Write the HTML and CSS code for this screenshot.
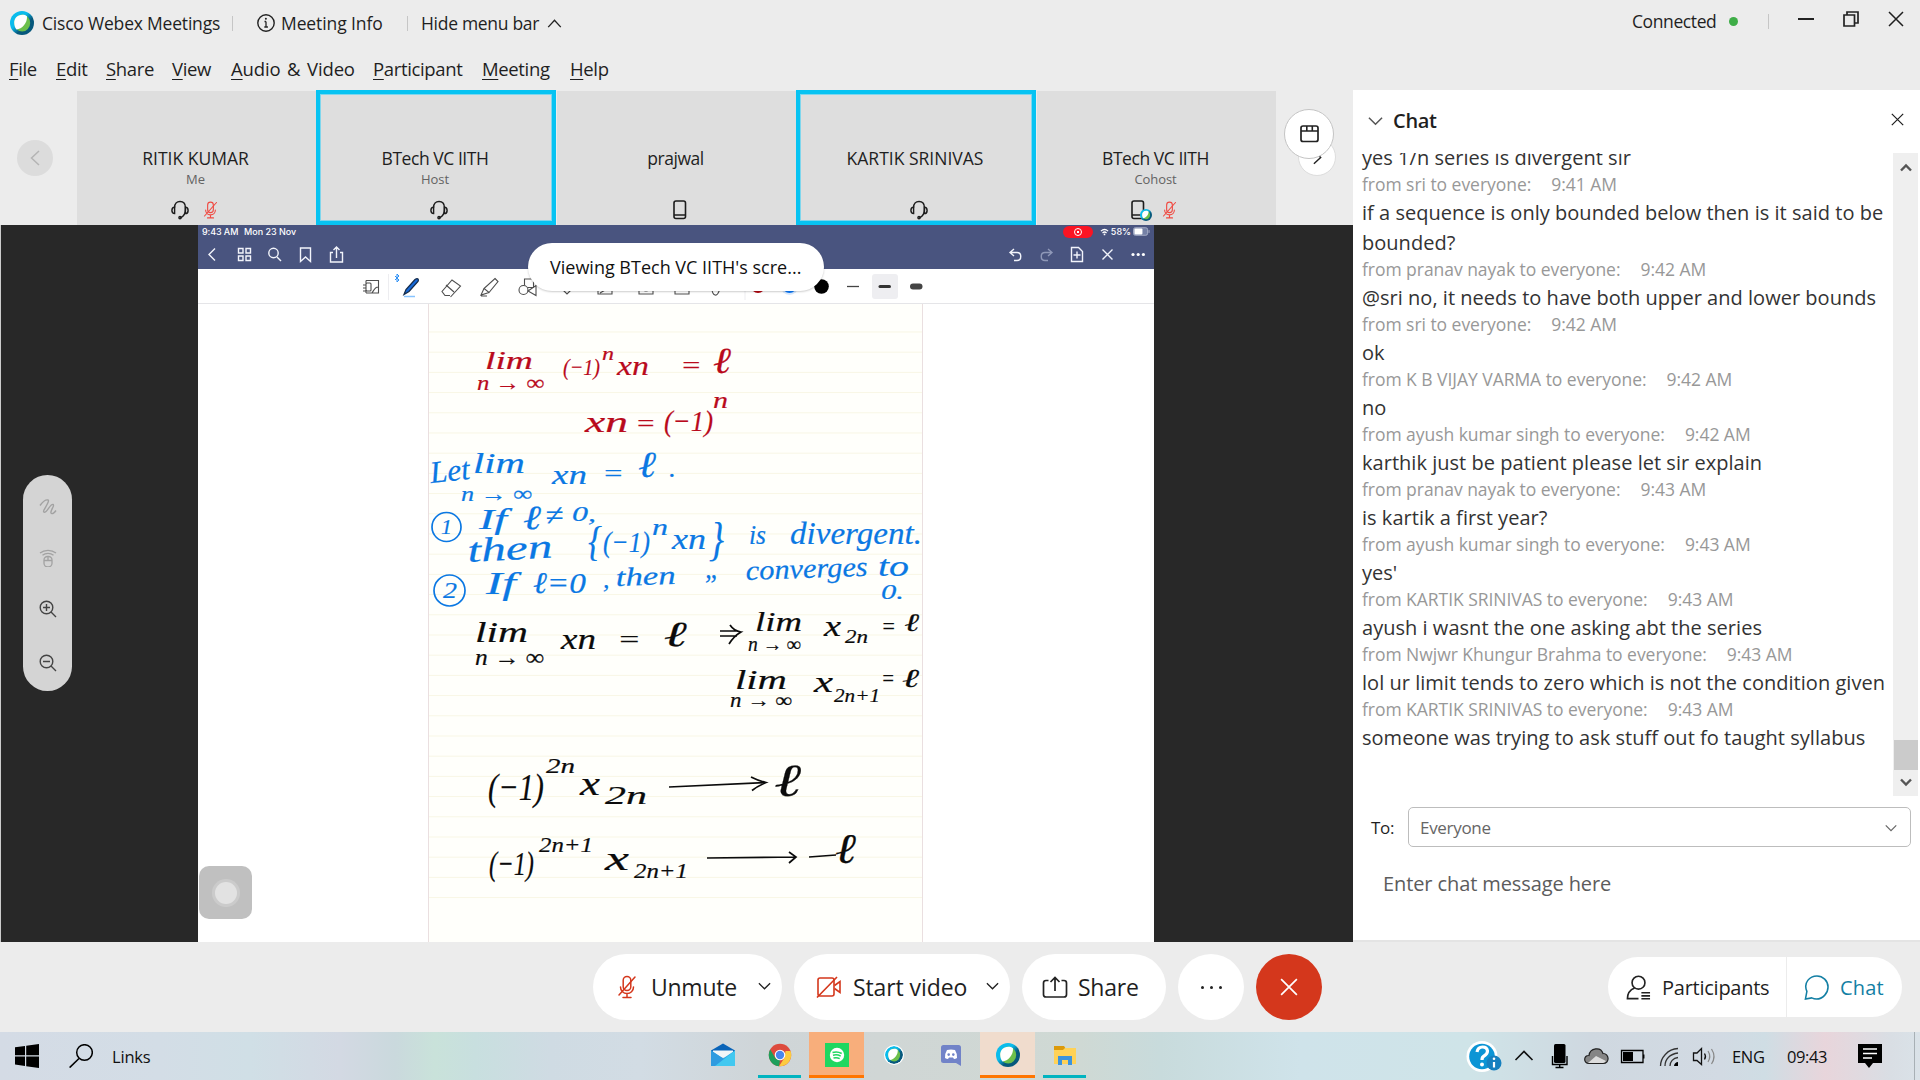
FILE: index.html
```html
<!DOCTYPE html>
<html lang="en">
<head>
<meta charset="utf-8">
<title>Cisco Webex Meetings</title>
<link rel="stylesheet" href="styles.css">
</head>
<body>
<svg width="0" height="0" class="defs">
  <defs>
    <linearGradient id="wxr" x1="0" y1="0" x2="1" y2="1"><stop offset=".4" stop-color="#0bbcec"/><stop offset=".62" stop-color="#07587c"/></linearGradient>
    <symbol id="webex" viewBox="0 0 24 24"><circle cx="12" cy="12" r="12" fill="url(#wxr)"/><ellipse cx="12.2" cy="12" rx="8" ry="8.6" fill="#6cbf4b"/><path d="M15 4C8 2.500 4 7 4.200 12c.1 3 1 5 2.300 6.500C12 18 17.500 12 17 5.200z" fill="#fff"/></symbol>
    <symbol id="headset" viewBox="0 0 20 22"><g fill="none" stroke="#1c1c1c" stroke-width="1.600" stroke-linecap="round"><path d="M4 8C4 4 6.500 1.500 10 1.500S16 4 16 8v3c0 4-1.500 6.500-5 8.500"/><path d="M4 8v7C2.200 15 1 13.500 1 11.500S2.200 8 4 8zM16 8v7c1.800 0 3-1.500 3-3.500S17.800 8 16 8z"/><circle cx="10" cy="19.500" r="1.200"/></g></symbol>
    <symbol id="mute" viewBox="0 0 20 24"><g fill="none" stroke="currentColor" stroke-width="1.500" stroke-linecap="round"><rect x="6.200" y="1.500" width="7.600" height="14" rx="3.800"/><path d="M3.500 12c0 4 3 6.500 6.500 6.500s6.500-2.500 6.500-6.500M10 18.500v4M6 22.500h8M18 2 2 20"/></g></symbol>
    <symbol id="phone" viewBox="0 0 14 20"><rect x="1" y="1" width="11.500" height="17.500" rx="2" fill="none" stroke="#1c1c1c" stroke-width="1.600"/><path d="M1 15h11.500" stroke="#1c1c1c" stroke-width="1.500"/></symbol>
    <symbol id="down" viewBox="0 0 16 10"><path d="M1 1.500 8 8.500l7-7" fill="none" stroke="currentColor" stroke-width="1.600"/></symbol>
    <symbol id="cross" viewBox="0 0 16 16"><path d="M1 1l14 14M15 1 1 15" fill="none" stroke="currentColor" stroke-width="1.500"/></symbol>
  </defs>
</svg>

<header class="titlebar">
  <svg class="logo"><use href="#webex"/></svg>
  <span class="app-name">Cisco Webex Meetings</span>
  <i class="sep sep-a"></i>
  <svg class="info" viewBox="0 0 18 18"><circle cx="9" cy="9" r="8.200" fill="none" stroke="#222" stroke-width="1.400"/><path d="M9 7.500v5.500M7.500 7.500H9M7.300 13h3.600" stroke="#222" stroke-width="1.300"/><circle cx="8.900" cy="4.800" r="1" fill="#222"/></svg>
  <span class="info-text">Meeting Info</span>
  <i class="sep sep-b"></i>
  <span class="hide-text">Hide menu bar</span>
  <svg class="hide-chev" viewBox="0 0 16 10"><path d="M1 9 8 1.500 15 9" fill="none" stroke="#222" stroke-width="1.500"/></svg>
  <div class="window-side">
    <span class="connected">Connected</span><i class="dot"></i><i class="sep sep-c"></i>
    <svg class="win min" viewBox="0 0 16 16"><path d="M0 8h16" stroke="#222" stroke-width="2"/></svg>
    <svg class="win" viewBox="0 0 16 16"><path d="M1 4h10.500v11H1zM4 4V1h11v11h-3.500" fill="none" stroke="#222" stroke-width="1.700"/></svg>
    <svg class="win"><use href="#cross"/></svg>
  </div>
</header>
<nav class="menu"><span><u>F</u>ile</span><span><u>E</u>dit</span><span><u>S</u>hare</span><span><u>V</u>iew</span><span class="av"><u>A</u>udio &amp; Video</span><span><u>P</u>articipant</span><span><u>M</u>eeting</span><span><u>H</u>elp</span></nav>

<main class="work">
  <section class="meeting">
    <div class="strip">
      <div class="prev"><svg viewBox="0 0 10 16"><path d="M9 1 1.500 8 9 15" fill="none" stroke="#b4b4b4" stroke-width="1.500"/></svg></div>
      <div class="tiles">
        <div class="tile"><b class="caps">RITIK KUMAR</b><small>Me</small><div class="tile-icons pair"><svg class="hs"><use href="#headset"/></svg><svg class="mu"><use href="#mute"/></svg></div></div>
        <div class="tile speaking"><b>BTech VC IITH</b><small>Host</small><div class="tile-icons shift"><svg class="hs"><use href="#headset"/></svg></div></div>
        <div class="tile"><b>prajwal</b><small></small><div class="tile-icons shift"><svg class="ph"><use href="#phone"/></svg></div></div>
        <div class="tile speaking"><b class="caps">KARTIK SRINIVAS</b><small></small><div class="tile-icons shift"><svg class="hs"><use href="#headset"/></svg></div></div>
        <div class="tile"><b>BTech VC IITH</b><small>Cohost</small><div class="tile-icons pair"><svg class="ph"><use href="#phone"/></svg><svg class="badge"><use href="#webex"/></svg><svg class="mu"><use href="#mute"/></svg></div></div>
      </div>
      <div class="pager">
        <div class="next"><svg viewBox="0 0 10 16"><path d="M1 1l7.500 7L1 15" fill="none" stroke="#222" stroke-width="1.600"/></svg></div>
        <div class="layout"><svg viewBox="0 0 20 18"><rect x="1" y="1" width="17" height="15.500" rx="2" fill="none" stroke="#222" stroke-width="1.700"/><path d="M1 6h17M6.800 1v5M12.300 1v5" stroke="#222" stroke-width="1.600"/></svg></div>
      </div>
    </div>

    <div class="stage">
      <div class="tool-rail">
        <svg viewBox="0 0 18 18"><path d="M1 7.500C4 3.500 7 1.500 9 2s-3 8-4 10 0 3 2 1.500S12 5.500 14 6.500 11 13 12 15s4-1 5-2.500" fill="none" stroke="#a2a2a2" stroke-width="1.400"/></svg>
        <svg viewBox="0 0 18 18"><g fill="none" stroke="#a2a2a2" stroke-width="1.300"><path d="M1 4c4.500-3.600 11.500-3.600 16 0M3.500 6.200c3-2.400 8-2.400 11 0"/><rect x="5" y="7.500" width="8" height="10.300" rx="3.500"/><path d="M5 11.500h8M9 7.500v4"/></g></svg>
        <svg viewBox="0 0 18 18"><g fill="none" stroke="#444" stroke-width="1.400"><circle cx="7.500" cy="7.500" r="6.300"/><path d="M12 12l5 5M4 7.500h7M7.500 4v7"/></g></svg>
        <svg class="out" viewBox="0 0 18 18"><g fill="none" stroke="#444" stroke-width="1.400"><circle cx="7.500" cy="7.500" r="6.300"/><path d="M12 12l5 5M4 7.500h7"/></g></svg>
      </div>
      <div class="shared">
        <div class="pad-head">
          <div class="pad-status"><span class="pad-time">9:43 AM</span><span class="pad-date">Mon 23 Nov</span>
            <div class="pad-right"><span class="rec"><i></i></span><svg class="wifi" viewBox="0 0 10 8"><path d="M1 3c2.500-2.200 5.500-2.200 8 0M2.800 5c1.500-1.300 3-1.300 4.500 0" fill="none" stroke="#fff" stroke-width="1.400"/><circle cx="5" cy="6.700" r="1" fill="#fff"/></svg><span>58%</span><svg class="batt" viewBox="0 0 18 9"><rect x=".5" y=".5" width="15" height="8" rx="2" fill="#7480a5" stroke="#a8afc8"/><rect x="1.500" y="1.300" width="8.500" height="6.400" rx="1" fill="#fff"/><path d="M17 3v3" stroke="#a8afc8"/></svg></div>
          </div>
          <svg class="pad-nav" viewBox="198 240 956 29"><g fill="none" stroke="#f2f4fb" stroke-width="1.400">
            <path d="M215 248.500l-6 6 6 6"/>
            <path d="M238.500 248.500h4.500v4.500h-4.500zM246 248.500h4.500v4.500H246zM238.500 256h4.500v4.500h-4.500zM246 256h4.500v4.500H246z"/>
            <circle cx="273.500" cy="253" r="4.700"/><path d="M277 257l4 4"/>
            <path d="M300.500 248h10v13.500l-5-4.500-5 4.500z"/>
            <path d="M333 252.500h-2.500v9.500h12v-9.500H340M336.500 258v-11M333.500 250l3-3 3 3"/>
            <path d="M1014 249l-4 3.500 4 3.500M1010 252.500h7c5 0 5 8 0 8h-3"/>
            <path d="M1048 249l4 3.500-4 3.500M1052 252.500h-7c-5 0-5 8 0 8h3" stroke="#8f98b8"/>
            <path d="M1071.500 247.500h7l4 4v10h-11zM1077 251.500v7M1073.500 255h7"/>
            <path d="M1102.500 249.500l10 10M1112.500 249.500l-10 10"/></g>
            <g fill="#fff"><circle cx="1133" cy="254.500" r="1.600"/><circle cx="1138.200" cy="254.500" r="1.600"/><circle cx="1143.400" cy="254.500" r="1.600"/></g></svg>
        </div>
        <svg class="pad-tools" viewBox="198 269 956 35">
          <g fill="none" stroke="#4e4e4e" stroke-width="1.100">
            <path d="M366 280.500h12.500v12.500H366M366 280.500v3M366 290v3M363 285h3M363 288h3M363 291h3M378 287c-3 0-4 3-6 6"/><rect x="366" y="283" width="5" height="8" rx="1"/>
            <path d="M450 295.500h-5l-3-4 10-11.500 8.500 6-10 11M446 285l8 7"/>
            <path d="M495 278.500l3 3-9 11-5-4zM484 288.500l-3 6.500 8-2.500M481 296h6"/>
            <circle cx="523.500" cy="290" r="4.500"/><path d="M524.500 285v-6h9v8.500h-6M536 285.500v10l-8-4.500z"/>
            <path d="M562 289l5 5 5-5M598 289v5h14v-5M600 293l7-4M639 289v5h14v-5M643 290q3 2 6 0M675 289v5h14v-5M712 288q0 6 3 7t5-7"/>
          </g>
          <path d="M388.500 274v26M745 274v26" stroke="#ededf0"/>
          <path d="M395 276l4 4-2 2v-8l2 2-4 4" fill="none" stroke="#2c8ff5"/>
          <path d="M404 294.500l2-5 9-10c3-2 4 0 3 2l-9 10z" fill="#1769d8" stroke="#152c4b" stroke-width="1.300"/><path d="M404 296.500h11" stroke="#88c4ff" stroke-width="1.500"/>
          <circle cx="758" cy="286" r="7" fill="#b30610"/><circle cx="789.500" cy="286" r="9" fill="#d7e8fd"/><circle cx="789.500" cy="286" r="7" fill="#0a7bff"/><circle cx="821.500" cy="286.500" r="7.300" fill="#000"/>
          <rect x="872" y="274" width="26" height="25" rx="3" fill="#eeeef1"/>
          <path d="M847 286.500h12" stroke="#444" stroke-width="1.300"/><path d="M880 286.500h9.500" stroke="#333" stroke-width="3" stroke-linecap="round"/><path d="M913 286.500h6.500" stroke="#444" stroke-width="6" stroke-linecap="round"/>
          <path d="M198 303.500h956" stroke="#e5e5e8"/>
        </svg>
        <svg class="canvas" viewBox="198 304 956 638">
          <defs><pattern id="rule" x="428" y="311.300" width="494" height="20.200" patternUnits="userSpaceOnUse"><path d="M0 .5h494" stroke="#f8f6e4"/></pattern></defs>
          <rect x="428" y="304" width="494" height="638" fill="#fffffb"/>
          <rect x="428" y="325" width="494" height="580" fill="url(#rule)"/>
          <path d="M428.500 304v638M922.500 304v638" stroke="#eadfe0"/>
          <g class="ink red">
            <text x="485" y="369" textLength="48" lengthAdjust="spacingAndGlyphs" font-size="26">lim</text><text x="477" y="390" textLength="67" lengthAdjust="spacingAndGlyphs" font-size="22">n → ∞</text>
            <text x="563" y="375" textLength="37" lengthAdjust="spacingAndGlyphs" font-size="24">(−1)</text><text x="602" y="360" textLength="12" lengthAdjust="spacingAndGlyphs" font-size="19">n</text><text x="617" y="375" textLength="32" lengthAdjust="spacingAndGlyphs" font-size="28">xn</text><text x="680" y="374" textLength="22" lengthAdjust="spacingAndGlyphs" font-size="26">=</text><text x="713" y="373" textLength="18" lengthAdjust="spacingAndGlyphs" font-size="37">ℓ</text>
            <text x="585" y="432" textLength="43" lengthAdjust="spacingAndGlyphs" font-size="30">xn</text><text x="635" y="432" textLength="21" lengthAdjust="spacingAndGlyphs" font-size="26">=</text><text x="664" y="431" textLength="49" lengthAdjust="spacingAndGlyphs" font-size="30">(−1)</text><text x="713" y="408" textLength="15" lengthAdjust="spacingAndGlyphs" font-size="24">n</text>
          </g>
          <g class="ink blue">
            <text x="431" y="483" textLength="40" lengthAdjust="spacingAndGlyphs" font-size="31" transform="rotate(-6 431 483)">Let</text><text x="473" y="473" textLength="52" lengthAdjust="spacingAndGlyphs" font-size="30">lim</text><text x="461" y="501" textLength="71" lengthAdjust="spacingAndGlyphs" font-size="22">n → ∞</text><text x="552" y="484" textLength="35" lengthAdjust="spacingAndGlyphs" font-size="28">xn</text><text x="602" y="482" textLength="22" lengthAdjust="spacingAndGlyphs" font-size="26">=</text><text x="638" y="477" textLength="18" lengthAdjust="spacingAndGlyphs" font-size="37">ℓ</text><text x="669" y="477" textLength="6" font-size="28">.</text>
            <circle cx="446.500" cy="527" r="14.500"/><text x="441" y="534" textLength="11" font-size="22">1</text>
            <text x="479" y="529" textLength="28" lengthAdjust="spacingAndGlyphs" font-size="30">If</text><text x="523" y="529" textLength="18" lengthAdjust="spacingAndGlyphs" font-size="34">ℓ</text><text x="545" y="525" textLength="18" lengthAdjust="spacingAndGlyphs" font-size="30">≠</text><text x="572" y="521" textLength="24" lengthAdjust="spacingAndGlyphs" font-size="20">0,</text>
            <text x="468" y="562" textLength="85" lengthAdjust="spacingAndGlyphs" font-size="34" transform="rotate(-3 468 562)">then</text><text x="588" y="555" textLength="14" lengthAdjust="spacingAndGlyphs" font-size="43">{</text><text x="603" y="552" textLength="47" lengthAdjust="spacingAndGlyphs" font-size="30">(−1)</text><text x="652" y="535" textLength="16" lengthAdjust="spacingAndGlyphs" font-size="23">n</text><text x="672" y="549" textLength="34" lengthAdjust="spacingAndGlyphs" font-size="29">xn</text><text x="709" y="555" textLength="15" lengthAdjust="spacingAndGlyphs" font-size="46">}</text><text x="749" y="544" textLength="17" lengthAdjust="spacingAndGlyphs" font-size="27">is</text><text x="790" y="544" textLength="132" lengthAdjust="spacingAndGlyphs" font-size="32">divergent.</text>
            <circle cx="449.500" cy="590.500" r="15.500"/><text x="443" y="598" textLength="14" lengthAdjust="spacingAndGlyphs" font-size="24">2</text>
            <text x="486" y="594" textLength="30" lengthAdjust="spacingAndGlyphs" font-size="31">If</text><text x="533" y="593" textLength="53" lengthAdjust="spacingAndGlyphs" font-size="30">ℓ=0</text><text x="603" y="588" textLength="7" font-size="26">,</text><text x="616" y="586" textLength="60" lengthAdjust="spacingAndGlyphs" font-size="26" transform="rotate(-2 616 586)">then</text><text x="702" y="594" textLength="15" lengthAdjust="spacingAndGlyphs" font-size="30">”</text><text x="746" y="580" textLength="122" lengthAdjust="spacingAndGlyphs" font-size="28" transform="rotate(-2 746 580)">converges</text><text x="878" y="576" textLength="31" lengthAdjust="spacingAndGlyphs" font-size="29">to</text><text x="881" y="599" textLength="23" lengthAdjust="spacingAndGlyphs" font-size="21">0.</text>
          </g>
          <g class="ink">
            <text x="475" y="642" textLength="53" lengthAdjust="spacingAndGlyphs" font-size="29">lim</text><text x="475" y="665" textLength="69" lengthAdjust="spacingAndGlyphs" font-size="23">n → ∞</text><text x="561" y="649" textLength="35" lengthAdjust="spacingAndGlyphs" font-size="29">xn</text><text x="617" y="648" textLength="24" lengthAdjust="spacingAndGlyphs" font-size="26">=</text><text x="664" y="646" textLength="23" lengthAdjust="spacingAndGlyphs" font-size="35">ℓ</text>
            <path d="M720 631h17M720 636h17M730 625q4 6 11 7q-7 4-12 12"/>
            <text x="755" y="631" textLength="47" lengthAdjust="spacingAndGlyphs" font-size="28">lim</text><text x="748" y="651" textLength="53" lengthAdjust="spacingAndGlyphs" font-size="20">n → ∞</text><text x="824" y="636" textLength="17" lengthAdjust="spacingAndGlyphs" font-size="29">x</text><text x="845" y="643" textLength="23" lengthAdjust="spacingAndGlyphs" font-size="19">2n</text><text x="881" y="635" textLength="15" lengthAdjust="spacingAndGlyphs" font-size="25">=</text><text x="904" y="631" textLength="15" lengthAdjust="spacingAndGlyphs" font-size="25">ℓ</text>
            <text x="735" y="689" textLength="52" lengthAdjust="spacingAndGlyphs" font-size="28">lim</text><text x="730" y="707" textLength="62" lengthAdjust="spacingAndGlyphs" font-size="20">n → ∞</text><text x="814" y="692" textLength="19" lengthAdjust="spacingAndGlyphs" font-size="30">x</text><text x="834" y="702" textLength="46" lengthAdjust="spacingAndGlyphs" font-size="19">2n+1</text><text x="881" y="687" textLength="14" lengthAdjust="spacingAndGlyphs" font-size="25">=</text><text x="902" y="687" textLength="17" lengthAdjust="spacingAndGlyphs" font-size="26">ℓ</text>
            <text x="488" y="800" textLength="56" lengthAdjust="spacingAndGlyphs" font-size="38">(−1)</text><text x="546" y="773" textLength="29" lengthAdjust="spacingAndGlyphs" font-size="21">2n</text><text x="580" y="795" textLength="20" lengthAdjust="spacingAndGlyphs" font-size="33">x</text><text x="605" y="804" textLength="42" lengthAdjust="spacingAndGlyphs" font-size="26">2n</text><path d="M669 787l97-4.500M751 777q8 4 15 5.500q-9 4-14 8"/><text x="774" y="796" textLength="27" lengthAdjust="spacingAndGlyphs" font-size="46">ℓ</text>
            <text x="489" y="875" textLength="45" lengthAdjust="spacingAndGlyphs" font-size="34">(−1)</text><text x="539" y="852" textLength="54" lengthAdjust="spacingAndGlyphs" font-size="22">2n+1</text><text x="605" y="870" textLength="24" lengthAdjust="spacingAndGlyphs" font-size="33">x</text><text x="634" y="878" textLength="54" lengthAdjust="spacingAndGlyphs" font-size="22">2n+1</text><path d="M707 858l89-1M789 852l7 5-7 6M809 857l27-2"/><text x="835" y="863" textLength="21" lengthAdjust="spacingAndGlyphs" font-size="42">ℓ</text>
          </g>
        </svg>
        <div class="assist"><i></i></div>
      </div>
      <div class="banner">Viewing BTech VC IITH's scre...</div>
    </div>
  </section>

  <aside class="chat">
    <div class="chat-head"><svg class="fold"><use href="#down"/></svg><h2>Chat</h2><svg class="close"><use href="#cross"/></svg></div>
    <div class="chat-body">
      <div class="log">
        <p>yes 1/n series is divergent sir</p>
        <h3>from sri to everyone:<time>9:41 AM</time></h3><p>if a sequence is only bounded below then is it said to be<br>bounded?</p>
        <h3>from pranav nayak to everyone:<time>9:42 AM</time></h3><p>@sri no, it needs to have both upper and lower bounds</p>
        <h3>from sri to everyone:<time>9:42 AM</time></h3><p>ok</p>
        <h3>from K B VIJAY VARMA to everyone:<time>9:42 AM</time></h3><p>no</p>
        <h3>from ayush kumar singh to everyone:<time>9:42 AM</time></h3><p>karthik just be patient please let sir explain</p>
        <h3>from pranav nayak to everyone:<time>9:43 AM</time></h3><p>is kartik a first year?</p>
        <h3>from ayush kumar singh to everyone:<time>9:43 AM</time></h3><p>yes'</p>
        <h3>from KARTIK SRINIVAS to everyone:<time>9:43 AM</time></h3><p>ayush i wasnt the one asking abt the series</p>
        <h3>from Nwjwr Khungur Brahma to everyone:<time>9:43 AM</time></h3><p>lol ur limit tends to zero which is not the condition given</p>
        <h3>from KARTIK SRINIVAS to everyone:<time>9:43 AM</time></h3><p>someone was trying to ask stuff out fo taught syllabus</p>
      </div>
      <div class="scroll"><svg viewBox="0 0 12 9"><path d="M1 7.500 6 2.500l5 5" fill="none" stroke="#555" stroke-width="2.400"/></svg><i class="thumb"></i><svg viewBox="0 0 12 9"><path d="M1 1.500l5 5 5-5" fill="none" stroke="#555" stroke-width="2.400"/></svg></div>
    </div>
    <div class="to"><label>To:</label><div class="select"><span>Everyone</span><svg><use href="#down"/></svg></div></div>
    <div class="compose">Enter chat message here</div>
  </aside>
</main>

<footer class="controls">
  <div class="pill unmute"><svg class="redmic"><use href="#mute"/></svg><span>Unmute</span><svg class="drop"><use href="#down"/></svg></div>
  <div class="pill video"><svg class="cam" viewBox="0 0 26 22"><g fill="none" stroke="#d4371c" stroke-width="1.600"><rect x="2" y="2" width="16" height="18" rx="2"/><path d="M18.500 9.500 24 5.500v11l-5.500-4M1 21.500 21 1"/></g></svg><span>Start video</span><svg class="drop"><use href="#down"/></svg></div>
  <div class="pill share"><svg class="up" viewBox="0 0 26 22"><g fill="none" stroke="#222" stroke-width="1.700"><path d="M6.500 4.500H4q-2.500 0-2.500 2.500v11.500Q1.500 21 4 21h18q2.500 0 2.500-2.500V7q0-2.500-2.500-2.500h-2.500M13 15V1.500M8.500 6 13 1.500 17.500 6"/></g></svg><span>Share</span></div>
  <div class="round more"><i></i><i></i><i></i></div>
  <div class="round leave"><svg><use href="#cross"/></svg></div>
  <div class="panels">
    <div class="pill-l"><svg viewBox="0 0 26 26"><g fill="none" stroke="#222" stroke-width="1.700"><circle cx="13" cy="8" r="6.700"/><path d="M9 13.500C4 15.500 1.500 19 1.500 24.500H13M16 18.500h9M16 21.700h9M16 24.700h9"/></g></svg><span>Participants</span></div>
    <div class="pill-r"><svg viewBox="0 0 26 26"><path d="M3 17C-1 8 6 1 13.500 1c6 0 11.500 5 11.500 11.500S19.500 25 13 25c-2 0-3.500-.5-5-1.200L1.500 25z" fill="none" stroke="#137fa4" stroke-width="1.600"/></svg><span>Chat</span></div>
  </div>
</footer>

<div class="taskbar">
  <svg class="start" viewBox="0 0 24 24"><path d="M0 3.300 10 2v9.300H0zM11.200 1.700 24 0v11.300H11.200zM0 12.500h10V22L0 20.600zM11.200 12.500H24V24l-12.800-1.800z"/></svg>
  <svg class="find" viewBox="0 0 24 24"><circle cx="15.500" cy="8.500" r="7.800" fill="none" stroke="#000" stroke-width="1.500"/><path d="M10 14.500.6 23.600" stroke="#000" stroke-width="1.600"/></svg>
  <span class="links">Links</span>
  <div class="apps">
    <div class="app"><svg viewBox="0 0 24 24"><path d="M0 7.500 12 .5l12 7v3H0z" fill="#0a64b8"/><path d="M2 7.500h20v7H2z" fill="#f3f6f8"/><path d="M0 7.500l12 8 12-8V23H0z" fill="#2ba5e5"/><path d="M0 7.500 24 23H0z" fill="#2f9be0"/><path d="M4 23 24 7.500V23z" fill="#42c8f0"/></svg></div>
    <div class="app run"><svg viewBox="0 0 24 24"><circle cx="12" cy="12" r="11.200" fill="#dd4b3e"/><path d="M2.200 6.500 7.500 15.500 12 17.500 11 23.200A11.200 11.200 0 0 1 2.200 6.500z" fill="#1d9f5b"/><path d="M11 23.200l5.500-8.500L17.500 8H22.500A11.200 11.200 0 0 1 11 23.200z" fill="#fccb3f"/><circle cx="12" cy="12" r="5.300" fill="#fff"/><circle cx="12" cy="12" r="4.200" fill="#4a86ee"/></svg></div>
    <div class="app hot"><svg viewBox="0 0 24 24"><path d="M0 0h24v24H0z" fill="#1ed760"/><circle cx="12" cy="12" r="7.200" fill="#fff"/><path d="M7.500 9.500q5-1.500 9.200 1M8 12.300q4-1.200 7.700.8M8.500 15q3.500-.9 6.200.6" fill="none" stroke="#1ed760" stroke-width="1.500"/></svg></div>
    <div class="app small"><svg><use href="#webex"/></svg></div>
    <div class="app"><svg viewBox="0 0 24 24"><path d="M4.500 2h15Q22 2 22 4.500V23l-5-3H4.500Q2 20 2 17.500v-13Q2 2 4.500 2z" fill="#7183c8"/><path d="M8 7q4-1.200 8 0 2.500 4 2 8-1.500 1-3 1l-1-1.500h-4L9 16q-1.500 0-3-1-.5-4 2-8z" fill="#fff"/><circle cx="9.700" cy="11.600" r="1.300" fill="#7183c8"/><circle cx="14.300" cy="11.600" r="1.300" fill="#7183c8"/></svg></div>
    <div class="app warm"><svg><use href="#webex"/></svg></div>
    <div class="app run"><svg viewBox="0 0 24 24"><path d="M1 3h10l2 3-2 2H1z" fill="#dc9a0b"/><path d="M1 7h9l2-2h11v16H1z" fill="#ffd257"/><path d="M5 22v-9h14v9h-4v-5H9v5z" fill="#3c93dc"/></svg></div>
  </div>
  <svg class="tray" viewBox="1460 1032 270 48">
    <circle cx="1482" cy="1056.500" r="15.500" fill="#fff"/><circle cx="1482" cy="1056.500" r="12.800" fill="#0c95d5"/><path d="M1477 1052q1-5 5.500-5t5 4q0 3-3.500 5-2 1-2 4" fill="none" stroke="#fff" stroke-width="3.200"/><circle cx="1482" cy="1064.500" r="2" fill="#fff"/><circle cx="1494" cy="1063" r="7.500" fill="#1680bf"/><path d="M1494 1062v5.500" stroke="#fff" stroke-width="2.200"/><circle cx="1494" cy="1058.800" r="1.300" fill="#fff"/>
    <path d="M1515.500 1060l8.500-8.500 8.500 8.500" fill="none" stroke="#111" stroke-width="1.600"/>
    <rect x="1554" y="1044" width="11.500" height="19" rx="1.500"/><path d="M1552.500 1056v8.500h14.500V1056M1559.700 1064v4M1555.500 1067.500h8" fill="none" stroke="#000" stroke-width="1.400"/>
    <path d="M1589 1063.500c-6 0-5.500-8.500 0-8 1-8 12-9 14-2 6-.5 7.500 10 0 10z" fill="#858585" stroke="#222" stroke-width="1.200"/><path d="M1588 1063l8-7 10 5q-1 1.500-3 2z" fill="#ddd"/>
    <path d="M1621.500 1050.500h21.500v12h-21.500zM1643.800 1054.500v4" fill="none" stroke="#000" stroke-width="1.300"/><rect x="1623" y="1052" width="10" height="9"/>
    <path d="M1660.500 1066c0-8 7-17 17.500-17.500M1665 1066c0-7 5-12 13-13M1670 1066c0-4 3-8 8-8.500" fill="none" stroke="#333" stroke-width="1.300"/><path d="M1674 1066c0-2 2-4 4-4v4z"/>
    <path d="M1693.500 1053h3.500l4.500-4.500v16L1697 1060.500h-3.500z" fill="none" stroke="#111" stroke-width="1.300"/><path d="M1704.500 1053.500q2 3 0 6" fill="none" stroke="#111" stroke-width="1.300"/><path d="M1708 1051q3.500 5.500 0 11M1711.500 1049q5 7.500 0 15" fill="none" stroke="#888" stroke-width="1.200"/>
  </svg>
  <span class="lang">ENG</span><span class="clock">09:43</span>
  <svg class="note" viewBox="0 0 24 24"><path d="M0 0h24v19h-9l-4 5-4-5H0z"/><path d="M5 5h14M5 9.500h14M5 14h9" stroke="#fff" stroke-width="1.300"/></svg>
</div>
</body>
</html>
```
FILE: styles.css
```css
* { box-sizing: border-box; }
body { margin: 0; width: 1920px; height: 1080px; overflow: hidden; display: flex; flex-direction: column; background: #ececec; color: #1f1f1f; font-family: "Open Sans", "Noto Sans", sans-serif; }
svg { display: block; flex: none; }
.defs { position: absolute; }
i { display: block; flex: none; }
span, b, label, time { white-space: nowrap; }

.titlebar { height: 46px; flex: none; display: flex; align-items: center; padding-left: 10px; font-size: 17.500px; letter-spacing: -0.2px; }
.logo { width: 24px; height: 24px; margin-right: 8px; }
.app-name { width: 190px; }
.sep { width: 1px; height: 15px; background: #c6c6c6; }
.info { width: 18px; height: 18px; margin: 0 6px 0 24px; }
.info-text { width: 126px; letter-spacing: -0.1px; }
.hide-text { width: 126px; margin-left: 13px; letter-spacing: -0.3px; }
.hide-chev { width: 15px; height: 9px; }
.window-side { display: flex; align-items: center; margin-left: auto; padding-bottom: 4px; height: 46px; }
.connected { width: 97px; letter-spacing: -0.4px; }
.dot { width: 9px; height: 9px; border-radius: 50%; background: #3ead47; }
.sep-c { margin: 0 29px 0 30px; }
.win { width: 16px; height: 16px; margin-right: 29px; margin-bottom: 4px; }
.win:last-child { margin-right: 16px; }

.menu { height: 44px; flex: none; display: grid; grid-template-columns: 47px 50px 66px 59px 142px 109px 88px 60px; padding: 9px 0 0 9px; font-size: 18.500px; letter-spacing: -0.35px; line-height: 27px; white-space: nowrap; }
.menu u { text-underline-offset: 3px; text-decoration-thickness: 1px; }
.menu .av { letter-spacing: -0.15px; word-spacing: 2px; }

.work { height: 852px; flex: none; display: flex; }
.meeting { width: 1353px; display: flex; flex-direction: column; }
.strip { height: 135px; flex: none; display: flex; align-items: center; }
.prev { width: 36px; height: 36px; margin: 0 24px 0 17px; border-radius: 50%; background: #dcdcdc; display: grid; place-items: center; }
.prev svg { width: 10px; height: 16px; }
.tiles { display: grid; grid-template-columns: repeat(5, 239px); column-gap: 1px; height: 135px; }
.tile { background: #dedede; display: flex; flex-direction: column; align-items: center; margin-top: 1px; padding-top: 53px; }
.tile b { font-weight: 400; font-size: 17.500px; line-height: 28px; letter-spacing: -0.45px; padding-right: 2px; }
.tile .caps { letter-spacing: 0; }
.tile small { font-size: 13px; line-height: 14px; height: 16px; color: #636363; letter-spacing: -0.1px; padding-right: 2px; }
.tile.speaking { margin-top: 0; margin-left: -1px; border: 4px solid #07c3f2; padding-top: 50px; outline: 1px solid #7fd6ed; outline-offset: -5px; }
.tile-icons { display: flex; align-items: center; height: 22px; margin-top: 11px; gap: 14px; }
.shift { padding-left: 6px; }
.pair { padding-right: 5px; }
.hs { width: 18px; height: 20px; }
.ph { width: 14px; height: 20px; }
.mu { width: 15px; height: 20px; color: #f04a42; }
.badge { width: 12px; height: 12px; margin: 9px -4px 0 -19px; }
.pager { width: 77px; height: 135px; position: relative; }
.next, .layout { position: absolute; border-radius: 50%; background: #fff; display: grid; place-items: center; }
.next { left: 22px; top: 48px; width: 38px; height: 38px; border: 1px solid #ddd; }
.next svg { width: 9px; height: 15px; }
.layout { left: 8px; top: 19px; width: 50px; height: 50px; border: 1px solid #c4c4c4; }
.layout svg { width: 20px; height: 18px; margin-left: 1px; }

.stage { flex: 1; background: #282828; border-left: 1px solid #ccc; display: flex; position: relative; }
.tool-rail { width: 49px; height: 216px; margin: 250px 126px 0 22px; border-radius: 25px; background: #d4d4d4; display: flex; flex-direction: column; align-items: center; padding-top: 23px; gap: 33px; }
.tool-rail svg { width: 18px; height: 18px; }
.tool-rail .out { margin-top: 3px; }
.shared { width: 956px; background: #fff; display: flex; flex-direction: column; position: relative; }
.pad-head { height: 44px; flex: none; background: #49547f; color: #fff; }
.pad-status { height: 15px; display: flex; align-items: center; padding-left: 4px; padding-bottom: 2px; font: 500 9px/12px Inter, sans-serif; }
.pad-time { width: 42px; letter-spacing: -0.1px; }
.pad-right { margin-left: auto; display: flex; align-items: center; padding-right: 4px; gap: 2px; }
.rec { width: 30px; height: 12px; border-radius: 6px; background: #fa1423; display: grid; place-items: center; margin-right: 5px; }
.rec i { width: 8px; height: 8px; border: 1px solid #fff; border-radius: 50%; background: radial-gradient(#fff 25%, #fa1423 35%); }
.wifi { width: 9px; height: 8px; }
.batt { width: 17px; height: 9px; }
.pad-nav { width: 956px; height: 29px; }
.pad-tools { width: 956px; height: 35px; }
.canvas { width: 956px; height: 638px; }
.ink { fill: #0b0b0b; stroke: #0b0b0b; stroke-width: .2px; font-family: "Liberation Serif", "DejaVu Serif", serif; font-style: italic; }
.ink.red { fill: #b90a1c; stroke: #b90a1c; }
.ink.blue { fill: #0b78e3; stroke: #0b78e3; }
.ink path, .ink circle { fill: none; stroke-width: 1.700px; }
.assist { position: absolute; left: 1px; top: 641px; width: 53px; height: 53px; border-radius: 10px; background: #c0c0c0; display: grid; place-items: center; }
.assist i { width: 22px; height: 22px; border-radius: 50%; background: #e2e2e2; box-shadow: 0 0 0 3px #cbcbcb; }
.banner { position: absolute; left: 527px; top: 18px; width: 296px; height: 48px; border-radius: 24px; background: #fff; box-shadow: 0 1px 2px #0003; padding-left: 22px; font-size: 18px; line-height: 48px; letter-spacing: 0; white-space: nowrap; color: #111; }

.chat { width: 567px; background: #fff; display: flex; flex-direction: column; height: 852px; border-bottom: 2px solid #e4e4e4; }
.chat-head { height: 63px; flex: none; display: flex; align-items: center; padding: 0 16px 2px 15px; }
.fold { width: 15px; height: 10px; color: #555; margin-right: 10px; }
h2 { margin: 0; font-size: 20px; font-weight: 600; line-height: 28px; letter-spacing: -0.3px; }
.close { width: 13px; height: 13px; margin: 0 0 2px auto; }
.chat-body { height: 643px; flex: none; display: flex; }
.log { width: 540px; overflow: hidden; padding-left: 9px; }
.log p { margin: 0; font-size: 20px; line-height: 30px; letter-spacing: 0.03px; color: #333; white-space: nowrap; }
.log p:first-child { margin-top: -10px; }
h3 { margin: 0; font-size: 17.500px; font-weight: 400; line-height: 25px; letter-spacing: -0.04px; color: #989898; white-space: nowrap; position: relative; top: -1px; }
time { margin-left: 20px; }
.scroll { width: 25px; background: #efefef; display: flex; flex-direction: column; align-items: center; padding: 10px 0 9px; }
.scroll svg { width: 12px; height: 9px; }
.thumb { width: 24px; height: 30px; background: #cbcbcb; margin: auto 0 8px; }
.to { height: 40px; flex: none; margin: 11px 9px 0 18px; display: flex; align-items: center; font-size: 17px; letter-spacing: -0.3px; }
.to label { width: 37px; }
.select { flex: 1; height: 40px; border: 1px solid #bdbdbd; border-radius: 5px; display: flex; align-items: center; justify-content: space-between; padding: 1px 13px 0 11px; color: #666; }
.select svg { width: 12px; height: 8px; }
.compose { margin: 22px 0 0 30px; font-size: 20px; line-height: 30px; letter-spacing: -0.1px; color: #5c5c5c; }

.controls { height: 90px; flex: none; display: flex; align-items: center; padding: 0 18px 0 593px; gap: 12px; font-size: 23px; letter-spacing: -0.25px; }
.pill { height: 66px; border-radius: 33px; background: #fff; display: flex; align-items: center; }
.unmute { width: 189px; padding-left: 24px; }
.video { width: 216px; padding-left: 22px; letter-spacing: -0.1px; }
.share { width: 144px; padding-left: 20px; }
.redmic { width: 20px; height: 24px; color: #d4371c; margin-right: 14px; }
.cam { width: 26px; height: 22px; margin-right: 11px; }
.up { width: 26px; height: 22px; margin-right: 10px; }
.drop { width: 13px; height: 8px; margin: 0 11px 3px auto; }
.round { width: 66px; height: 66px; border-radius: 50%; background: #fff; display: flex; align-items: center; justify-content: center; gap: 6px; }
.more i { width: 3px; height: 3px; border-radius: 50%; background: #222; }
.leave { background: #d4371c; color: #fff; }
.leave svg { width: 18px; height: 18px; }
.panels { margin-left: auto; display: flex; gap: 1px; font-size: 20px; letter-spacing: -0.25px; }
.pill-l, .pill-r { height: 60px; background: #fff; display: flex; align-items: center; }
.pill-l { width: 178px; border-radius: 30px 0 0 30px; padding-left: 18px; }
.pill-r { width: 115px; border-radius: 0 30px 30px 0; padding-left: 17px; color: #137fa4; letter-spacing: 0.2px; }
.panels svg { width: 25px; height: 25px; margin-right: 11px; }

.taskbar { height: 48px; flex: none; display: flex; align-items: center; background: linear-gradient(90deg, #d4dbe5 0, #d3dde6 160px, #d0dfe6 250px, #d3d9e3 340px, #cad9dd 395px, #c9e2da 435px, #c8dfdf 475px, #cfdbe3 550px, #d2dce4 640px, #cfd5d8 760px, #d0d6d5 880px, #cfd9d4 1080px, #c8dbdc 1160px, #cfe3ea 1300px, #cfe4e8 1470px, #cfd8e0 1590px, #d2dae3 1720px, #cfdde4 1765px, #e8d5db 1825px, #d9dee4 1890px, #dae2e8 1920px); color: #111; position: relative; font-size: 16.500px; }
.start { width: 24px; height: 24px; margin-left: 15px; }
.find { width: 24px; height: 24px; margin: 0 19px 0 30px; }
.links { width: 583px; letter-spacing: -0.2px; }
.apps { display: flex; gap: 2px; height: 48px; width: 765px; }
.app { width: 55px; display: grid; place-items: center; border-bottom: 3px solid transparent; height: 46px; padding-top: 2px; }
.app svg { width: 24px; height: 24px; }
.small svg { width: 20px; height: 20px; background: #fff; border-radius: 50%; padding: 1px; }
.run { width: 43px; margin: 0 6px; border-color: #00b4c0; }
.hot { background: #f8ae7b; border-color: #ff7500; }
.warm { background: #f0dccd; border-color: #ff7500; }
.tray { width: 270px; height: 48px; }
.lang { width: 55px; margin-left: 2px; letter-spacing: -0.3px; }
.clock { width: 71px; letter-spacing: -0.4px; }
.note { width: 24px; height: 24px; }
.taskbar::after { content: ""; position: absolute; right: 5px; top: 0; width: 1px; height: 48px; background: #a8b0b5; }
```
